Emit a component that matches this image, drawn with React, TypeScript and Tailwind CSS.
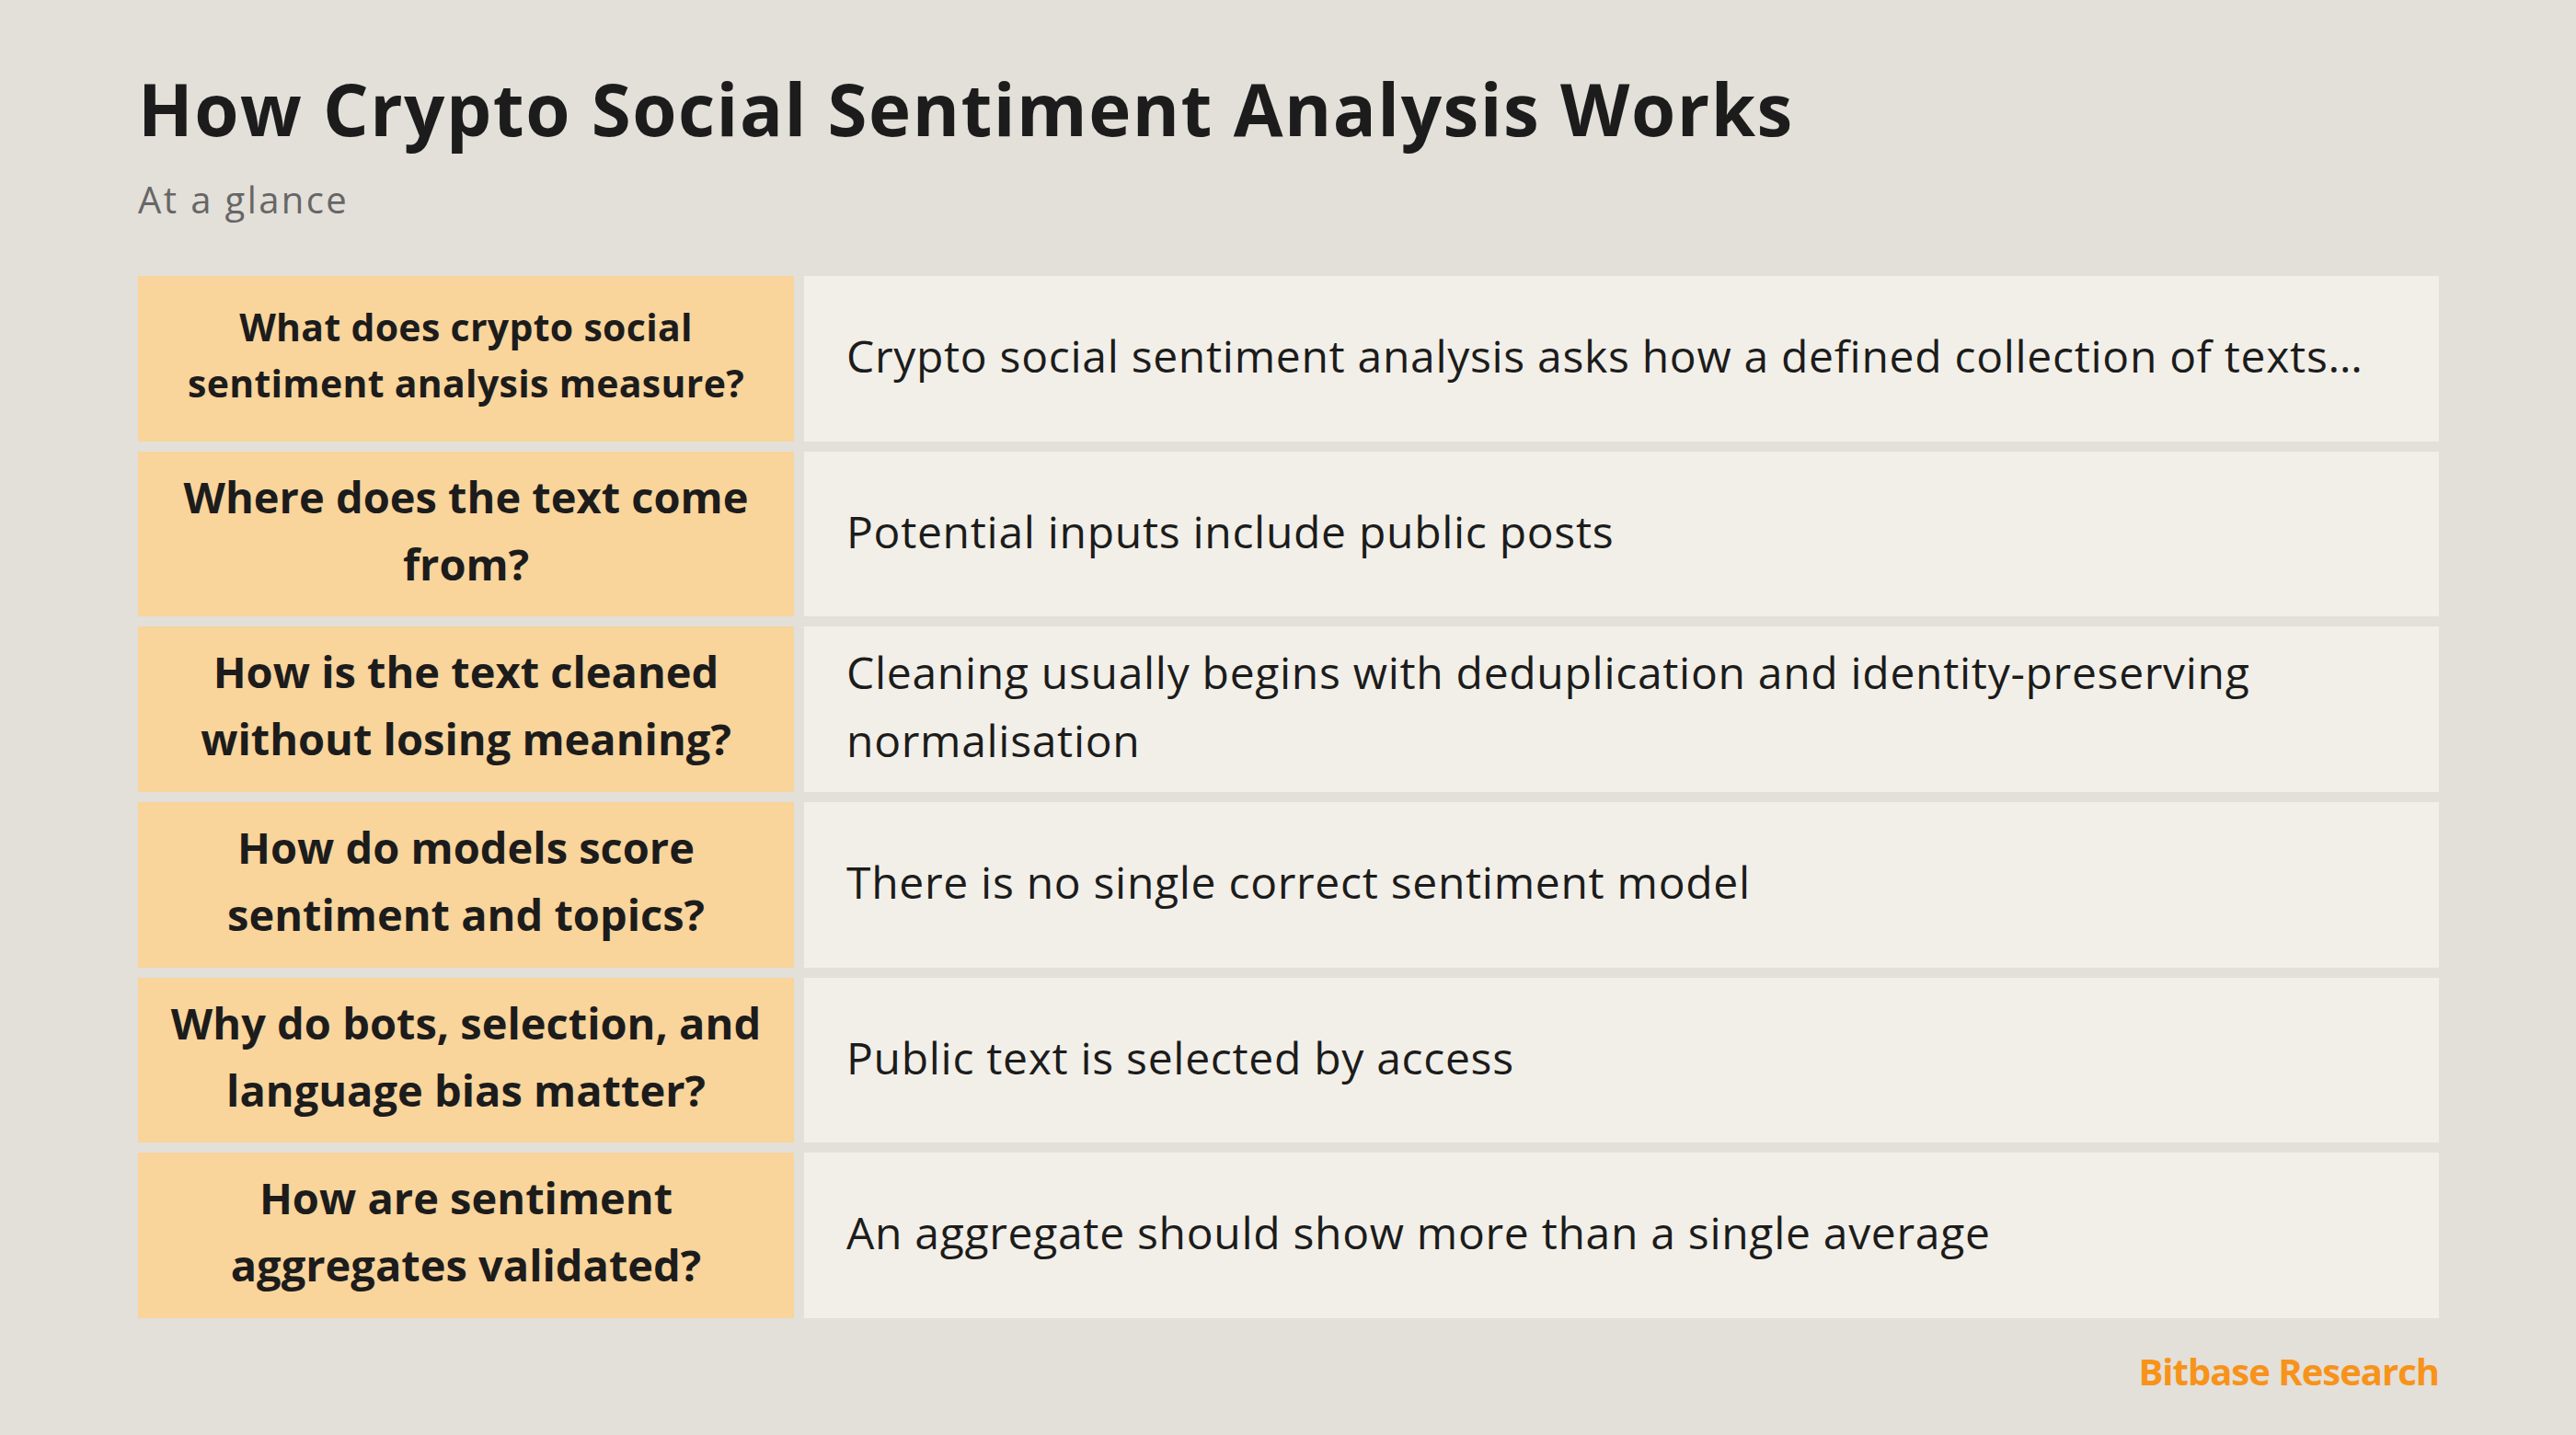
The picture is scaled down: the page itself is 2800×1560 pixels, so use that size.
import React from "react";

const rows: { q: string; a: string; small?: boolean }[] = [
  {
    q: "What does crypto social sentiment analysis measure?",
    a: "Crypto social sentiment analysis asks how a defined collection of texts…",
    small: true,
  },
  { q: "Where does the text come from?", a: "Potential inputs include public posts" },
  {
    q: "How is the text cleaned without losing meaning?",
    a: "Cleaning usually begins with deduplication and identity-preserving normalisation",
  },
  { q: "How do models score sentiment and topics?", a: "There is no single correct sentiment model" },
  { q: "Why do bots, selection, and language bias matter?", a: "Public text is selected by access" },
  { q: "How are sentiment aggregates validated?", a: "An aggregate should show more than a single average" },
];

export default function App() {
  return (
    <div
      className="w-[2800px] h-[1560px] bg-[#e3dfd9] pl-[150px] text-[#1c1c1c] overflow-hidden"
      style={{ fontFamily: '"Open Sans", "Noto Sans", sans-serif' }}
    >
      <div className="w-[2501px] flex flex-col">
        <h1 className="mt-[71px] text-[78px] leading-[94px] font-bold tracking-[1.5px]">
          How Crypto Social Sentiment Analysis Works
        </h1>
        <p className="mt-[28px] text-[40px] leading-[48px] text-[#666666] tracking-[2.4px]">At a glance</p>

        <div className="mt-[59px] h-[1133px] flex flex-col gap-[11px]">
          {rows.map((r, i) => (
            <div key={i} className="flex-1 flex gap-[11px]">
              <div className="w-[713px] bg-[#f9d49b] flex items-center justify-center px-[18px] pb-[8px]">
                <p
                  className={
                    r.small
                      ? "text-center font-bold text-[41px] leading-[61px] tracking-[0.3px]"
                      : "text-center font-bold text-[47px] leading-[73px] tracking-[0px]"
                  }
                >
                  {r.q}
                </p>
              </div>
              <div className="flex-1 bg-[#f2efe8] flex items-center pl-[46px] pr-[40px] pb-[6px]">
                <p className="text-[48px] leading-[74px] tracking-[0.7px]">{r.a}</p>
              </div>
            </div>
          ))}
        </div>

        <div className="mt-[34px] flex justify-end">
          <span className="text-[40px] leading-[48px] font-bold text-[#f7931a] tracking-[-1px]">
            Bitbase Research
          </span>
        </div>
      </div>
    </div>
  );
}
